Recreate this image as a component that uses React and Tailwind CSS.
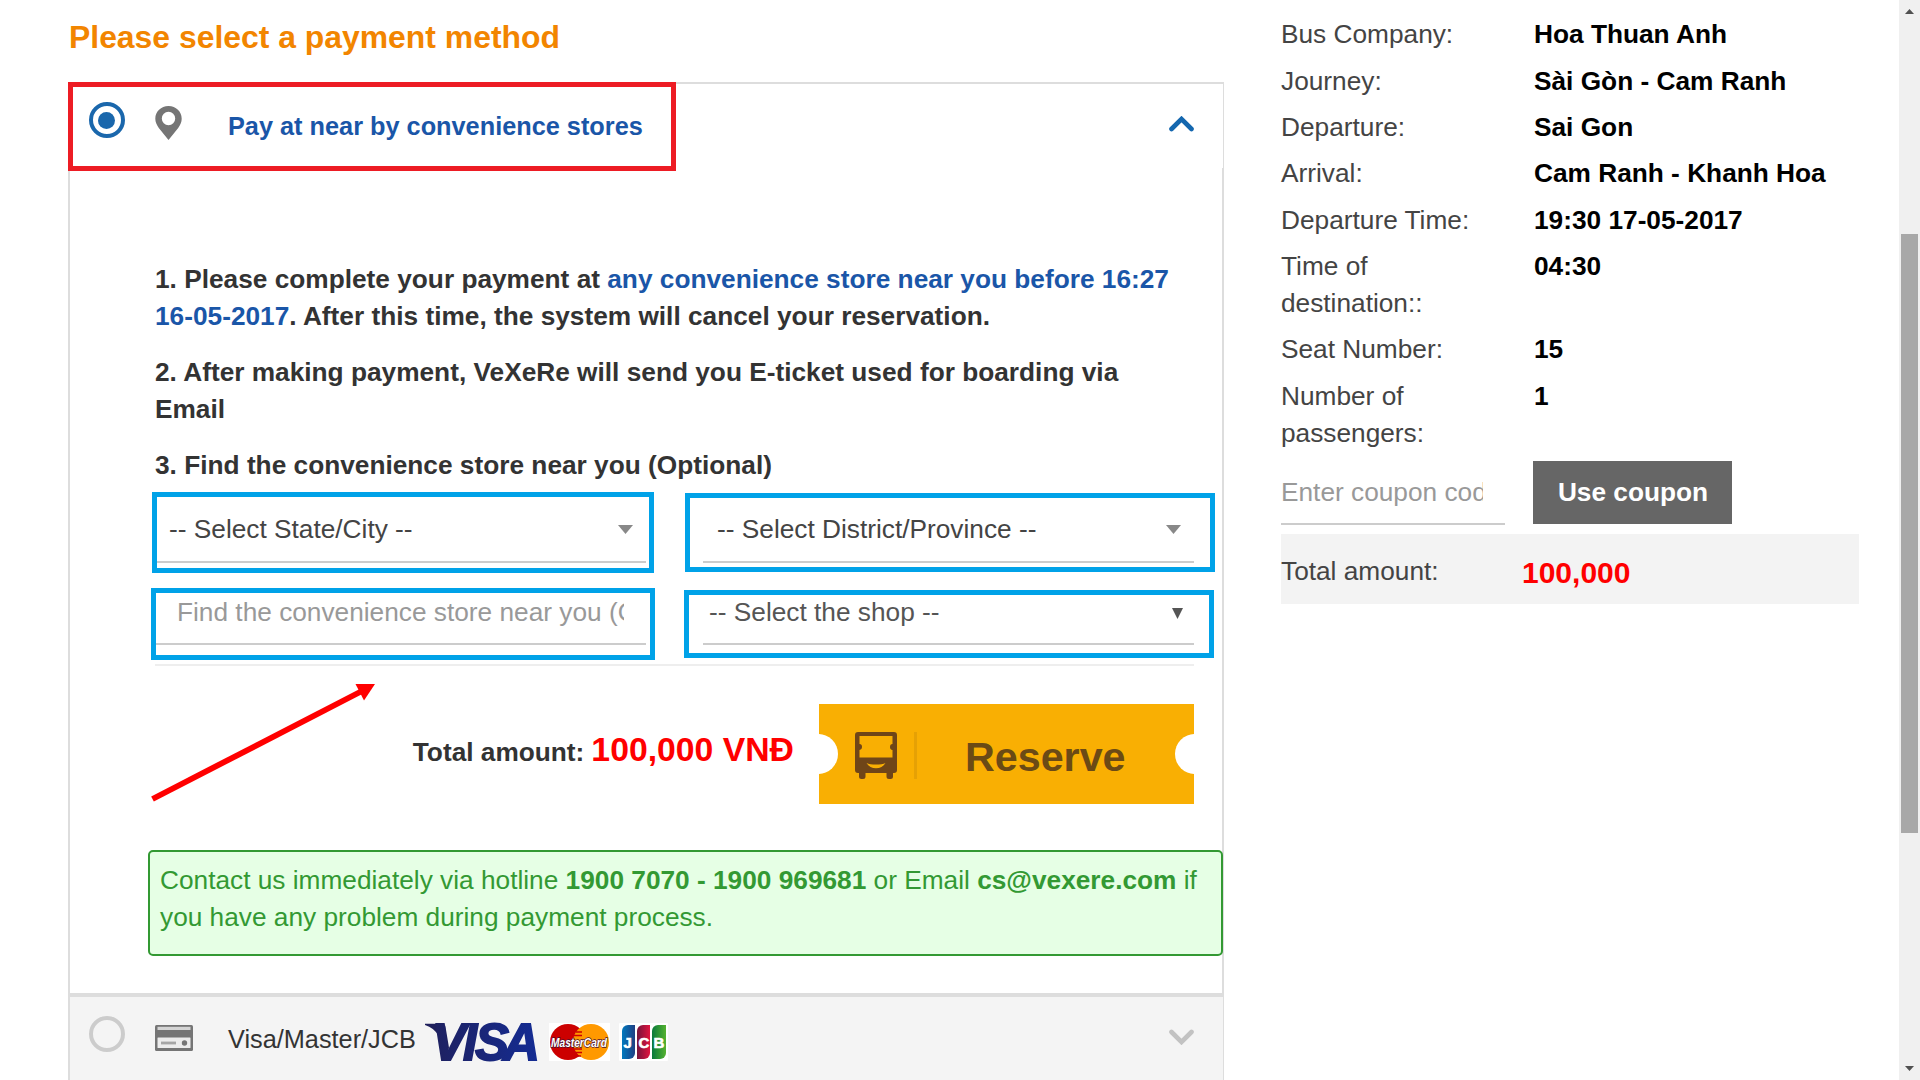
const rows = [
  ["Bus Company:", "Hoa Thuan Anh", "h-[47px]"],
  ["Journey:", "Sài Gòn - Cam Ranh", "h-[46px]"],
  ["Departure:", "Sai Gon", "h-[46px]"],
  ["Arrival:", "Cam Ranh - Khanh Hoa", "h-[47px]"],
  ["Departure Time:", "19:30 17-05-2017", "h-[46px]"],
  ["Time of destination::", "04:30", "h-[83px]"],
  ["Seat Number:", "15", "h-[47px]"],
  ["Number of passengers:", "1", "h-[83px]"],
];

function Pin() {
  return (
    <svg width="27" height="34" viewBox="0 0 27 34" className="block">
      <path
        fillRule="evenodd"
        fill="#757575"
        d="M13.5 0C6 0 .3 5.600 .3 12.700c0 3.300 1.500 6.300 3.500 9.300L13.500 34l9.700-12c2-3 3.500-6 3.500-9.300C26.700 5.600 21 0 13.500 0Zm0 5.800a6.700 6.700 0 1 1 0 13.400 6.700 6.700 0 0 1 0-13.400Z"
      />
    </svg>
  );
}

function Chevron({ className }) {
  return (
    <svg width="25" height="16" viewBox="0 0 25 16" className={className}>
      <path d="M2.500 13 12.500 3l10 10" fill="none" stroke="currentColor" strokeWidth="4.600" strokeLinecap="round" strokeLinejoin="miter" />
    </svg>
  );
}

function Caret() {
  return (
    <svg width="15" height="9" viewBox="0 0 15 9" className="block">
      <path d="M0 0h15L7.500 9Z" fill="#888" />
    </svg>
  );
}

function CardIcon() {
  return (
    <svg width="38" height="26" viewBox="0 0 38 26" className="block">
      <rect width="38" height="26" rx="1.500" fill="#757575" />
      <rect x="2.500" y="1.800" width="33" height="3.200" fill="#d4d4d4" />
      <rect x="2.500" y="12.500" width="33" height="10.500" rx="0.500" fill="#ececec" />
      <path d="M6 18h15" stroke="#a5a5a5" strokeWidth="2.800" />
      <circle cx="29.500" cy="18" r="2.700" fill="#757575" />
    </svg>
  );
}

function Bus() {
  return (
    <svg width="42" height="47" viewBox="0 0 42 47" className="block">
      <path
        fill="#6f4518"
        fillRule="evenodd"
        d="M3 0h36a3 3 0 0 1 3 3v35a3 3 0 0 1-3 3h-1v3.500a2.500 2.500 0 0 1-2.500 2.500h-1.500a2.500 2.500 0 0 1-2.500-2.500V41H10.500v3.500A2.500 2.500 0 0 1 8 47H6.500A2.500 2.500 0 0 1 4 44.500V41H3a3 3 0 0 1-3-3V3a3 3 0 0 1 3-3Zm1.500 4v8c1.700 0 2.500 1 2.500 2.800S6.200 17.800 4.500 18v7.500h33V18c-1.700-.2-2.500-1.200-2.500-3s.8-3 2.500-3V4ZM11.500 31c4 2 15 2 19 0-2 3.500-5.500 5.200-9.500 5.200S13.500 34.500 11.500 31Z"
      />
    </svg>
  );
}

function Logos() {
  return (
    <div className="flex font-bold">
      <svg width="114" height="38" viewBox="0 0 114 38" className="ml-[10px] block overflow-visible">
        <defs>
          <linearGradient id="visa" gradientUnits="userSpaceOnUse" x1="0" x2="114" y1="0" y2="0">
            <stop offset="0" stopColor="#1f205c" />
            <stop offset="1" stopColor="#142c94" />
          </linearGradient>
        </defs>
        <path d="M0 0.800h17.500q2.500 0 3 3l3.500 21-1.500 6C17 16 12 6 0 2Z" fill="#1f205c" />
        <text x="7 38 50 78" y="37" fontFamily="Liberation Sans, sans-serif" fontStyle="italic" fontSize="51" fill="url(#visa)" stroke="url(#visa)" strokeWidth="1.800">VISA</text>
      </svg>
      <svg width="61" height="38" viewBox="0 0 61 38" className="ml-[10px] block overflow-visible">
        <rect width="61" height="38" fill="#fff" />
        <circle cx="19" cy="19" r="18" fill="#cc0000" />
        <circle cx="42" cy="19" r="18" fill="#ff9900" />
        <path d="M27 9h6M25 12.500h8M24 26h9M26 29.500h7M28 33h4" stroke="#cc0000" strokeWidth="1.600" />
        <text x="2" y="24" textLength="56" lengthAdjust="spacingAndGlyphs" fontFamily="Liberation Sans, sans-serif" fontStyle="italic" fontSize="13.500" fill="#fff" stroke="#4a1230" strokeWidth="1.400" paintOrder="stroke">MasterCard</text>
      </svg>
      <svg width="49" height="38" viewBox="0 0 49 38" className="ml-[9px] block overflow-visible">
        <defs>
          <linearGradient id="jb" x1="0" x2="1"><stop offset="0" stopColor="#0079be" /><stop offset="1" stopColor="#1f3f83" /></linearGradient>
          <linearGradient id="jr" x1="0" x2="1"><stop offset="0" stopColor="#75143b" /><stop offset="1" stopColor="#e0143f" /></linearGradient>
          <linearGradient id="jg" x1="0" x2="1"><stop offset="0" stopColor="#087a3c" /><stop offset="1" stopColor="#55b230" /></linearGradient>
        </defs>
        <rect width="49" height="38" rx="1" fill="#fff" />
        <path d="M9 2h7v28a6 6 0 0 1-6 6H3V8a6 6 0 0 1 6-6Z" fill="url(#jb)" />
        <path d="M24 2h7v28a6 6 0 0 1-6 6h-7V8a6 6 0 0 1 6-6Z" fill="url(#jr)" />
        <path d="M39 2h8v28a6 6 0 0 1-6 6h-8V8a6 6 0 0 1 6-6Z" fill="url(#jg)" />
        <text x="4.500 19.500 34.500" y="24.500" fontFamily="Liberation Sans, sans-serif" fontSize="15" fill="#fff" stroke="#fff" strokeWidth="0.600">JCB</text>
      </svg>
    </div>
  );
}

function Panel() {
  return (
    <section className="relative h-[998px] w-[1156px] border-t-2 border-l-2 border-[#ddd]">
      <div className="flex h-[84px] border-r border-[#ddd]">
        <div className="mt-[18px] ml-[19px] flex size-[36px] items-center justify-center rounded-full border-[4px] border-[#1a67ac]">
          <div className="mr-px size-[17px] rounded-full bg-[#1a67ac]" />
        </div>
        <div className="mt-[22px] ml-[30px]"><Pin /></div>
        <div className="mt-[24px] ml-[46px] text-[25.300px] font-bold text-[#1a56a8]">Pay at near by convenience stores</div>
        <Chevron className="mt-[32px] mr-[29px] ml-auto block text-[#1467af]" />
      </div>

      <div className="flex h-[825px] flex-col border-r-2 border-[#ddd]">
        <div className="mt-[93px] ml-[85px] font-bold text-[#333]">
          <p className="h-[93px]">
            1. Please complete your payment at <span className="text-[#1a56a8]">any convenience store near you before 16:27<br />16-05-2017</span>. After this time, the system will cancel your reservation.
          </p>
          <p className="h-[93px]">2. After making payment, VeXeRe will send you E-ticket used for boarding via<br />Email</p>
          <p className="h-[36px]">3. Find the convenience store near you (Optional)</p>
        </div>

        <div className="ml-[85px] grid w-[1039px] grid-cols-[491px_491px] justify-between text-[#444]">
          <div className="flex h-[80px] border-b-2 border-[#ccc] pt-[28px] pl-[14px]">
            <span>-- Select State/City --</span>
            <span className="mt-[14px] mr-[13px] ml-auto"><Caret /></span>
          </div>
          <div className="flex h-[80px] border-b-2 border-[#ccc] pt-[28px] pl-[14px]">
            <span>-- Select District/Province --</span>
            <span className="mt-[14px] mr-[13px] ml-auto"><Caret /></span>
          </div>
          <div className="flex h-[82px] border-b-2 border-[#ccc] pt-[31px] pl-[22px]">
            <span className="w-[447px] overflow-hidden text-[#999]">Find the convenience store near you (Optional)</span>
          </div>
          <div className="flex h-[82px] border-b-2 border-[#ccc] pt-[31px] pl-[6px] text-[#555]">
            <span>-- Select the shop --</span>
            <svg width="11" height="11" viewBox="0 0 11 11" className="mt-[14px] mr-[11px] ml-auto block"><path d="M0 0h11L5.500 11Z" fill="#555" /></svg>
          </div>
        </div>
        <div className="mt-[19px] ml-[85px] h-[2px] w-[1039px] bg-[#eee]" />

        <div className="mt-[38px] mr-[28px] flex justify-end">
          <div className="mt-[27px] flex h-[40px] items-baseline gap-[7px] font-bold text-[#333]">
            <span>Total amount:</span>
            <span className="text-[33.750px] leading-[37px] text-[#f00]">100,000 VNĐ</span>
          </div>
          <div className="relative ml-[25px] flex h-[100px] w-[375px] overflow-hidden bg-[#f9af03]">
            <div className="absolute top-[30px] left-[-21px] size-[40px] rounded-full bg-white" />
            <div className="absolute top-[30px] right-[-21px] size-[40px] rounded-full bg-white" />
            <div className="mt-[28px] ml-[36px]"><Bus /></div>
            <div className="mt-[28px] ml-[17px] h-[47px] w-[3px] bg-[#e6a105]" />
            <div className="mt-[29px] ml-[48px] text-[41.250px] leading-[48px] font-bold text-[#6b4a15]">Reserve</div>
          </div>
        </div>

        <div className="mt-[46px] mr-[-1px] ml-[78px] h-[106px] rounded-[5px] border-2 border-[#393] bg-[#e6ffe5] pt-[10px] pl-[10px] text-[#393]">
          Contact us immediately via hotline <b>1900 7070 - 1900 969681</b> or Email <b>cs@vexere.com</b> if<br />you have any problem during payment process.
        </div>
      </div>

      <div className="flex h-[88px] border-t-4 border-r border-[#ddd] bg-[#f4f4f4] text-[#333]">
        <div className="mt-[19px] ml-[19px] size-[36px] rounded-full border-[4px] border-[#ccc]" />
        <div className="mt-[28px] ml-[30px]"><CardIcon /></div>
        <div className="mt-[24px] ml-[35px] w-[187px] text-[25.300px]">Visa/Master/JCB</div>
        <div className="mt-[26px]"><Logos /></div>
        <Chevron className="mt-[32px] mr-[29px] ml-auto block rotate-180 text-[#c2c2c2]" />
      </div>

      {/* Highlight frames and pointer arrow laid over the form */}
      <div className="absolute top-[-2px] left-[-2px] h-[89px] w-[608px] border-5 border-[#ed1c24]" />
      <div className="absolute top-[408px] left-[82px] h-[81px] w-[502px] border-5 border-[#00a2e8]" />
      <div className="absolute top-[409px] left-[615px] h-[79px] w-[530px] border-5 border-[#00a2e8]" />
      <div className="absolute top-[504px] left-[81px] h-[72px] w-[504px] border-5 border-[#00a2e8]" />
      <div className="absolute top-[506px] left-[614px] h-[68px] w-[530px] border-5 border-[#00a2e8]" />
      <svg width="230" height="124" viewBox="0 0 230 124" className="absolute top-[598px] left-[80px]">
        <path d="M2.500 117 212 9" stroke="#f00" strokeWidth="5.800" />
        <path d="M205.500 2H225L214 18.500Z" fill="#f00" />
      </svg>
    </section>
  );
}

export default function App() {
  return (
    <div className="flex h-[1080px] w-[1920px] overflow-hidden bg-white font-['Liberation_Sans',Arial,sans-serif] text-[26.250px] leading-[37px] whitespace-nowrap">
      <main className="ml-[68px] w-[1156px]">
        <h1 className="h-[82px] pt-[17px] pl-px text-[31.900px] leading-[40px] font-bold text-[#f28500]">Please select a payment method</h1>
        <Panel />
      </main>

      <aside className="mt-[16px] ml-[57px] w-[578px]">
        <dl>
          {rows.map(([label, value, height]) => (
            <div key={label} className={`flex ${height}`}>
              <dt className="w-[194px] whitespace-normal text-[#444]">{label}</dt>
              <dd className="ml-[59px] font-bold text-black">{value}</dd>
            </div>
          ))}
        </dl>
        <div className="flex">
          <div className="h-[64px] w-[224px] border-b-2 border-[#ccc] pt-[13px]">
            <div className="w-[202px] overflow-hidden text-[#999]">Enter coupon code</div>
          </div>
          <div className="ml-[28px] h-[63px] w-[199px] bg-[#666] pt-[13px] pl-px text-center font-bold text-white">Use coupon</div>
        </div>
        <div className="mt-[9px] flex h-[70px] bg-[#f3f3f3] text-[#444]">
          <span className="w-[241px] pt-[19px]">Total amount:</span>
          <span className="pt-[20px] text-[30px] font-bold text-[#f00]">100,000</span>
        </div>
      </aside>

      <div className="relative ml-auto flex w-[21px] flex-col items-center bg-[#f0f0f0]">
        <svg width="9" height="5" viewBox="0 0 9 5" className="mt-[9px]"><path d="M0 5h9L4.500 0Z" fill="#505050" /></svg>
        <div className="mt-[220px] mr-px h-[599px] w-[17px] bg-[#a8a8a8]" />
        <svg width="9" height="5" viewBox="0 0 9 5" className="mt-auto mb-[9px]"><path d="M0 0h9L4.500 5Z" fill="#505050" /></svg>
      </div>
    </div>
  );
}
